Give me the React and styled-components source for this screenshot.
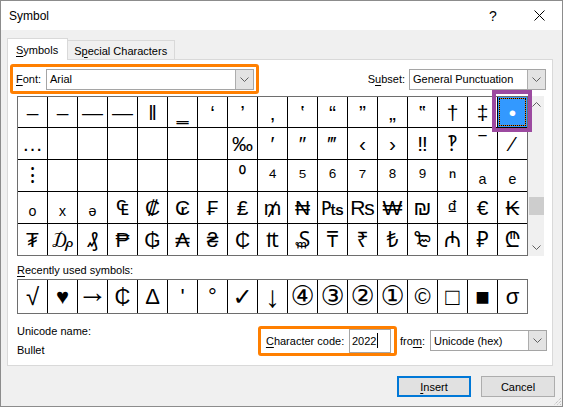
import React from 'react';
import styled, { createGlobalStyle } from 'styled-components';

const Global = createGlobalStyle`
  html, body { margin: 0; padding: 0; background: #fff; }
  body { font-family: "Liberation Sans", Arial, sans-serif; font-size: 11px; color: #000; }
  * { box-sizing: border-box; }
  u { text-decoration-thickness: 1px; text-underline-offset: 2px; }
`;

const SYM_FONT = `"Liberation Sans", "Noto Sans", "DejaVu Sans", sans-serif`;

const Window = styled.div`
  width: 563px;
  height: 407px;
  border: 1px solid #8c8c8c;
  background: #f0f0f0;
  display: flex;
  flex-direction: column;
  position: relative;
  overflow: hidden;
`;

const TitleBar = styled.div`
  height: 29px;
  background: #fff;
  display: flex;
  align-items: center;
  padding-left: 8px;
  flex-shrink: 0;
`;

const Title = styled.div`
  flex: 1;
  font-size: 12px;
`;

const TitleButton = styled.div`
  width: 46px;
  height: 29px;
  display: flex;
  align-items: center;
  justify-content: center;
  font-size: 14px;
`;

const Body = styled.div`
  padding: 0 9px 0 6px;
  display: flex;
  flex-direction: column;
`;

const TabRow = styled.div`
  margin-top: 8px;
  height: 21px;
  display: flex;
  align-items: flex-end;
`;

const Tab = styled.div`
  display: flex;
  align-items: center;
  border: 1px solid #d9d9d9;
  white-space: nowrap;
  ${(p) =>
    p.$active
      ? `
    height: 22px;
    margin-bottom: -1px;
    background: #fff;
    border-bottom: none;
    padding: 0 9px 0 8px;
    position: relative;
    z-index: 1;
  `
      : `
    height: 19px;
    background: #f0f0f0;
    border-left: none;
    border-bottom: none;
    padding: 1px 7px 0 6px;
  `}
`;

const Panel = styled.div`
  height: 307px;
  border: 1px solid #d9d9d9;
  background: #fff;
  padding: 4px 8px 0 9px;
  display: flex;
  flex-direction: column;
`;

const TopRow = styled.div`
  height: 30px;
  display: flex;
  align-items: center;
  justify-content: space-between;
  margin-left: -7px;
  margin-right: -2px;
`;

const Highlight = styled.div`
  border: 3px solid #ff7f00;
  border-radius: 3px;
  height: 30px;
  width: ${(p) => p.$w}px;
  display: flex;
  align-items: center;
  justify-content: space-between;
  padding: ${(p) => p.$pad};
  flex-shrink: 0;
`;

const Group = styled.div`
  display: flex;
  align-items: center;
  gap: ${(p) => p.$gap || 4}px;
  margin-left: ${(p) => p.$ml || 0}px;
`;

const SelectBox = styled.div`
  width: ${(p) => p.$w}px;
  height: 21px;
  border: 1px solid #a5a5a5;
  background: #fff;
  display: flex;
  align-items: stretch;
`;

const SelectText = styled.div`
  flex: 1;
  display: flex;
  align-items: center;
  padding-left: 3px;
  font-size: 11px;
  white-space: nowrap;
  overflow: hidden;
`;

const DropButton = styled.div`
  width: 18px;
  background: #e3e3e3;
  border-left: 1px solid #adadad;
  display: flex;
  align-items: center;
  justify-content: center;
`;

const Chevron = ({ up, color = '#606060' }) => (
  <svg width="9" height="5" viewBox="0 0 9 5">
    <polyline
      points={up ? '0.5,4.5 4.5,0.5 8.5,4.5' : '0.5,0.5 4.5,4.5 8.5,0.5'}
      fill="none"
      stroke={color}
      strokeWidth="1"
    />
  </svg>
);

const Select = ({ w, children }) => (
  <SelectBox $w={w}>
    <SelectText>{children}</SelectText>
    <DropButton>
      <Chevron />
    </DropButton>
  </SelectBox>
);

const GridArea = styled.div`
  margin-top: 2px;
  display: flex;
  height: 160px;
`;

const SymbolGrid = styled.div`
  display: grid;
  grid-template-columns: repeat(17, 29px);
  grid-template-rows: ${(p) => p.$rows};
  gap: 1px;
  background: #000;
  border: 1px solid #6e6e6e;
  flex-shrink: 0;
  align-self: flex-start;
  margin-top: ${(p) => p.$mt || 0}px;
`;

const Cell = styled.div`
  position: relative;
  background: ${(p) => (p.$selected ? '#3399ff' : '#fff')};
  color: ${(p) => (p.$selected ? '#fff' : '#000')};
  display: flex;
  align-items: center;
  justify-content: center;
  font-family: ${SYM_FONT};
  font-size: ${(p) => p.$size || 21}px;
  line-height: 1;
  padding-bottom: ${(p) => p.$lift || 0}px;
  overflow: visible;
  white-space: nowrap;
  ${(p) =>
    p.$selected &&
    `
    &::before {
      content: '';
      position: absolute;
      inset: 1px;
      border: 1px solid #e0801a;
    }
    &::after {
      content: '';
      position: absolute;
      inset: 1px;
      border: 1px dotted #000;
    }
  `}
`;

const SelectionMark = styled.div`
  position: absolute;
  top: -7px;
  left: -6px;
  right: -5px;
  bottom: -5px;
  border: 4px solid #9c4aa0;
  z-index: 2;
  pointer-events: none;
`;

const ScrollBar = styled.div`
  width: 16px;
  height: 160px;
  background: #f0f0f0;
  display: flex;
  flex-direction: column;
  align-items: center;
`;

const ScrollArrow = styled.div`
  height: 17px;
  width: 100%;
  display: flex;
  align-items: center;
  justify-content: center;
`;

const ScrollGap = styled.div`
  height: ${(p) => (p.$h ? `${p.$h}px` : 'auto')};
  flex: ${(p) => (p.$h ? '0 0 auto' : 1)};
`;

const Thumb = styled.div`
  width: 15px;
  height: 18px;
  background: #cdcdcd;
`;

const Label = styled.div`
  line-height: 16px;
  margin-top: ${(p) => p.$mt || 0}px;
  white-space: nowrap;
`;

const BottomRow = styled.div`
  margin-top: 9px;
  height: 35px;
  display: flex;
  align-items: center;
`;

const InfoCol = styled.div`
  display: flex;
  flex-direction: column;
`;

const RightGroup = styled.div`
  margin-left: auto;
  margin-right: -3px;
  display: flex;
  align-items: center;
`;

const CodeInput = styled.div`
  width: 42px;
  height: 24px;
  border: 1px solid #a5a5a5;
  display: flex;
  align-items: center;
  padding-left: 2px;
  font-size: 11px;
`;

const Caret = styled.span`
  display: inline-block;
  width: 1px;
  height: 15px;
  background: #000;
  margin-left: 1px;
`;

const ButtonRow = styled.div`
  margin-top: 10px;
  margin-right: -2px;
  display: flex;
  justify-content: flex-end;
  gap: 10px;
`;

const Button = styled.div`
  width: 74px;
  height: 21px;
  background: #e1e1e1;
  border: ${(p) => (p.$primary ? '2px solid #0078d7' : '1px solid #adadad')};
  display: flex;
  align-items: center;
  justify-content: center;
  font-size: 11px;
`;

const Grip = styled.svg`
  position: absolute;
  right: 0;
  bottom: 0;
`;

const rows = [
  ['‒', '–', '—', '―', '‖', '‗', '‘', '’', '‚', '‛', '“', '”', '„', '‟', '†', '‡', '•'],
  ['…', '', '', '', '', '', '', '‰', '′', '″', '‴', '‹', '›', '‼', '‽', '‾', '⁄'],
  ['⁝', '', '', '', '', '', '', '⁰', '⁴', '⁵', '⁶', '⁷', '⁸', '⁹', 'ⁿ', 'ₐ', 'ₑ'],
  ['ₒ', 'ₓ', 'ₔ', '₠', '₡', '₢', '₣', '₤', '₥', '₦', '₧', '₨', '₩', '₪', '₫', '€', '₭'],
  ['₮', '₯', '₰', '₱', '₲', '₳', '₴', '₵', '₶', '₷', '₸', '₹', '₺', '₻', '₼', '₽', '₾'],
];

const recent = [
  { c: '√', s: 24 },
  { c: '♥' },
  { c: '→', s: 30, l: 9 },
  { c: '₵' },
  { c: 'Δ' },
  { c: "'" },
  { c: '°' },
  { c: '✓', s: 24 },
  { c: '↓', s: 30 },
  { c: '④', s: 27 },
  { c: '③', s: 27 },
  { c: '②', s: 27 },
  { c: '①', s: 27 },
  { c: '©' },
  { c: '□', s: 24 },
  { c: '■', s: 24 },
  { c: 'σ' },
];

export default function App() {
  return (
    <>
      <Global />
      <Window>
        <TitleBar>
          <Title>Symbol</Title>
          <TitleButton>?</TitleButton>
          <TitleButton>
            <svg width="11" height="11" viewBox="0 0 11 11">
              <path d="M0.5 0.5 L10.5 10.5 M10.5 0.5 L0.5 10.5" stroke="#000" strokeWidth="1" />
            </svg>
          </TitleButton>
        </TitleBar>
        <Body>
          <TabRow>
            <Tab $active>
              <span>
                <u>S</u>ymbols
              </span>
            </Tab>
            <Tab>
              <span>
                S<u>p</u>ecial Characters
              </span>
            </Tab>
          </TabRow>
          <Panel>
            <TopRow>
              <Highlight $w={249} $pad="0 2px 0 3px">
                <Label>
                  <u>F</u>ont:
                </Label>
                <Select w={208}>Arial</Select>
              </Highlight>
              <Group $gap={4}>
                <Label>
                  S<u>u</u>bset:
                </Label>
                <Select w={137}>General Punctuation</Select>
              </Group>
            </TopRow>
            <GridArea>
              <SymbolGrid $rows="30px repeat(4, 31px)">
                {rows.map((r, ri) =>
                  r.map((c, ci) => {
                    const sel = ri === 0 && ci === 16;
                    return (
                      <Cell key={`${ri}-${ci}`} $selected={sel}>
                        {c}
                        {sel && <SelectionMark />}
                      </Cell>
                    );
                  })
                )}
              </SymbolGrid>
              <ScrollBar>
                <ScrollArrow>
                  <Chevron up />
                </ScrollArrow>
                <ScrollGap $h={84} />
                <Thumb />
                <ScrollGap />
                <ScrollArrow>
                  <Chevron />
                </ScrollArrow>
              </ScrollBar>
            </GridArea>
            <Label $mt={6}>
              <u>R</u>ecently used symbols:
            </Label>
            <SymbolGrid $rows="33px" $mt={1}>
              {recent.map((r, i) => (
                <Cell key={i} $size={r.s || 22} $lift={r.l}>
                  {r.c}
                </Cell>
              ))}
            </SymbolGrid>
            <BottomRow>
              <InfoCol>
                <Label>Unicode name:</Label>
                <Label $mt={3}>Bullet</Label>
              </InfoCol>
              <RightGroup>
                <Highlight $w={139} $pad="0 3px 0 5px">
                  <Label>
                    <u>C</u>haracter code:
                  </Label>
                  <CodeInput>
                    2022
                    <Caret />
                  </CodeInput>
                </Highlight>
                <Group $gap={5} $ml={3}>
                  <Label>
                    fro<u>m</u>:
                  </Label>
                  <Select w={117}>Unicode (hex)</Select>
                </Group>
              </RightGroup>
            </BottomRow>
          </Panel>
          <ButtonRow>
            <Button $primary>
              <span>
                <u>I</u>nsert
              </span>
            </Button>
            <Button>Cancel</Button>
          </ButtonRow>
        </Body>
        <Grip width="10" height="10" viewBox="0 0 10 10">
          <path d="M9 2 L2 9 M9 5 L5 9 M9 8 L8 9" stroke="#b0b0b0" strokeWidth="1" strokeDasharray="1 1" />
        </Grip>
      </Window>
    </>
  );
}
